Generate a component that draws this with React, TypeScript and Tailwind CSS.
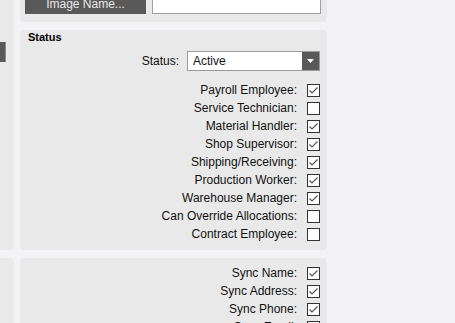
const statusFlags = [
  { label: 'Payroll Employee:', checked: true },
  { label: 'Service Technician:', checked: false },
  { label: 'Material Handler:', checked: true },
  { label: 'Shop Supervisor:', checked: true },
  { label: 'Shipping/Receiving:', checked: true },
  { label: 'Production Worker:', checked: true },
  { label: 'Warehouse Manager:', checked: true },
  { label: 'Can Override Allocations:', checked: false },
  { label: 'Contract Employee:', checked: false },
]

const syncFlags = [
  { label: 'Sync Name:', checked: true },
  { label: 'Sync Address:', checked: true },
  { label: 'Sync Phone:', checked: true },
  { label: 'Sync Email:', checked: true },
]

const Checkbox = ({ checked }: { checked: boolean }) => (
  <div className="w-[13px] h-[13px] shrink-0 border border-[#333] bg-white flex items-center justify-center">
    {checked && (
      <svg width="11" height="11" viewBox="0 0 11 11">
        <polyline points="1.5,5.5 4,8 9.5,2.5" fill="none" stroke="#555" strokeWidth="1.2" />
      </svg>
    )}
  </div>
)

const FlagRow = ({ label, checked }: { label: string; checked: boolean }) => (
  <div className="h-[18px] shrink-0 flex items-center justify-end gap-[10px]">
    <span className="text-[12px] leading-none text-[#111]">{label}</span>
    <Checkbox checked={checked} />
  </div>
)

export default function App() {
  return (
    <div className="w-[455px] h-[323px] overflow-hidden bg-[#f3f3f5] flex gap-[6px] font-['Liberation_Sans',Arial,sans-serif]">
      {/* left column, mostly off screen */}
      <div className="w-[14px] shrink-0 flex flex-col gap-[8px] -mt-[10px]">
        <div className="h-[260px] shrink-0 bg-[#e9e9e9] rounded-br-[4px] pt-[52px]">
          <div className="w-[6px] h-[20px] bg-[#595959] border-r border-[#8a8a8a]" />
        </div>
        <div className="h-[80px] shrink-0 bg-[#e9e9e9] rounded-tr-[4px]" />
      </div>

      {/* main column */}
      <div className="w-[307px] shrink-0 flex flex-col gap-[8px] -mt-[10px]">
        {/* image row */}
        <div className="h-[32px] shrink-0 bg-[#e9e9e9] rounded-b-[4px] pt-[4px] pl-[5px] pr-[6px] flex gap-[6px]">
          <div className="w-[121px] h-[20px] bg-[#595959] flex items-center justify-center text-[12px] text-[#e8e8e8]">
            Image Name...
          </div>
          <div className="flex-1 h-[20px] bg-white border border-[#a0a0a0]" />
        </div>

        {/* status */}
        <div className="h-[220px] shrink-0 bg-[#e9e9e9] rounded-[4px] pl-[8px] pr-[7px] pt-[1px]">
          <div className="text-[11px] font-bold leading-[13px] text-black">Status</div>
          <div className="mt-[7px] flex items-center justify-end gap-[8px]">
            <span className="text-[12px] text-[#111]">Status:</span>
            <div className="w-[133px] h-[20px] bg-white border border-[#9a9a9a] flex items-center">
              <span className="flex-1 pl-[5px] text-[12px] text-[#111]">Active</span>
              <div className="w-[17px] h-full bg-[#595959] flex items-center justify-center">
                <svg width="7" height="4" viewBox="0 0 7 4">
                  <polygon points="0,0 7,0 3.5,4" fill="#fff" />
                </svg>
              </div>
            </div>
          </div>
          <div className="mt-[10px] flex flex-col">
            {statusFlags.map(f => (
              <FlagRow key={f.label} label={f.label} checked={f.checked} />
            ))}
          </div>
        </div>

        {/* sync */}
        <div className="h-[90px] shrink-0 bg-[#e9e9e9] rounded-t-[4px] pt-[6px] pr-[7px] flex flex-col">
          {syncFlags.map(f => (
            <FlagRow key={f.label} label={f.label} checked={f.checked} />
          ))}
        </div>
      </div>
    </div>
  )
}
